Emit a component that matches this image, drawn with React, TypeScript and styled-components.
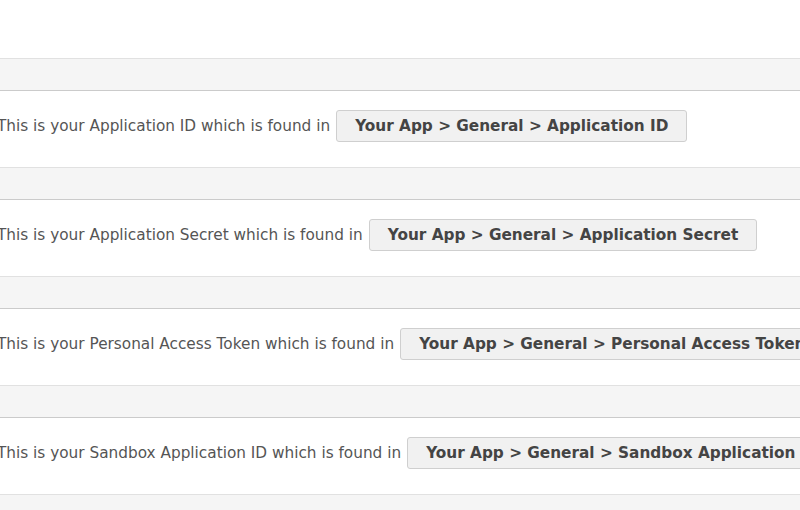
import styled, { createGlobalStyle } from "styled-components";

const GlobalStyle = createGlobalStyle`
  html, body {
    margin: 0;
    padding: 0;
    background: #fff;
    overflow: hidden;
  }
  body {
    font-family: "DejaVu Sans", Verdana, sans-serif;
  }
`;

interface Setting {
  label: string;
  path: string[];
}

const settings: Setting[] = [
  { label: "Application ID", path: ["Your App", "General", "Application ID"] },
  { label: "Application Secret", path: ["Your App", "General", "Application Secret"] },
  { label: "Personal Access Token", path: ["Your App", "General", "Personal Access Token"] },
  { label: "Sandbox Application ID", path: ["Your App", "General", "Sandbox Application ID"] },
];

const App: React.FC = () => {
  return (
    <>
      <GlobalStyle />
      <Page>
        <TopSpace />
        {settings.map((s) => (
          <Section key={s.label}>
            <Band />
            <Row>
              <Description>
                This is your {s.label} which is found in
              </Description>
              <PathTag>{s.path.join(" > ")}</PathTag>
            </Row>
          </Section>
        ))}
        <Band />
      </Page>
    </>
  );
};

const Page = styled.div`
  width: 800px;
  height: 510px;
  overflow: hidden;
`;

const TopSpace = styled.div`
  height: 58px;
`;

const Section = styled.div`
  display: flex;
  flex-direction: column;
`;

const Band = styled.div`
  height: 31px;
  background: #f5f5f5;
  border-top: 1px solid #e1e1e1;
  border-bottom: 1px solid #cbcbcb;
  flex-shrink: 0;
`;

const Row = styled.div`
  height: 76px;
  box-sizing: border-box;
  padding-bottom: 6px;
  display: flex;
  align-items: center;
  gap: 6px;
  margin-left: -3px;
  white-space: nowrap;
`;

const Description = styled.span`
  font-size: 15.3px;
  color: #555;
`;

const PathTag = styled.span`
  display: inline-flex;
  align-items: center;
  box-sizing: border-box;
  height: 32px;
  padding: 0 18px;
  font-size: 15.3px;
  font-weight: 700;
  color: #444;
  background: #f1f1f1;
  border: 1px solid #cfcfcf;
  border-radius: 3px;
  flex-shrink: 0;
`;

export default App;
